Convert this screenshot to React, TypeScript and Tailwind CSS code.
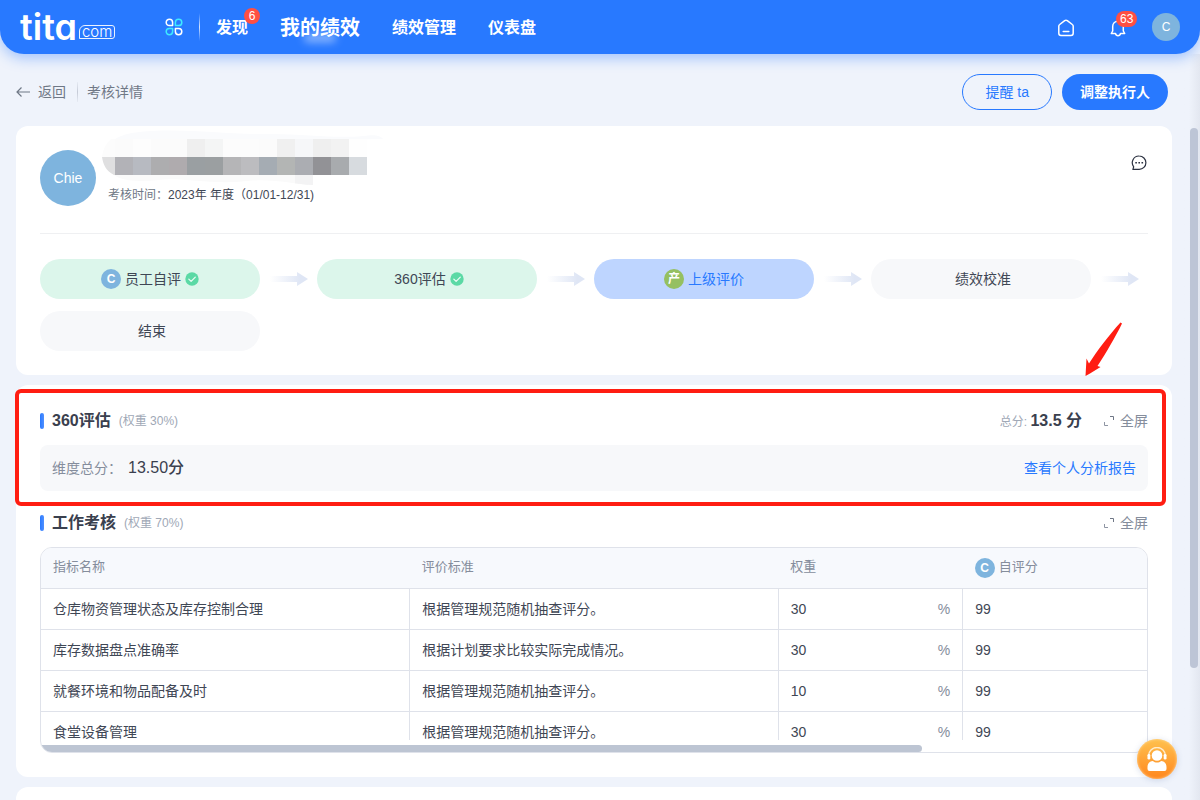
import type { ReactNode } from 'react'

type StepState = 'done' | 'current' | 'todo'

interface Step {
  label: string
  state: StepState
  badge?: { text: string; color: string }
}

const steps: Step[] = [
  { label: '员工自评', state: 'done', badge: { text: 'C', color: 'bg-[#7eb4de]' } },
  { label: '360评估', state: 'done' },
  { label: '上级评价', state: 'current', badge: { text: '产', color: 'bg-[#95c061]' } },
  { label: '绩效校准', state: 'todo' },
  { label: '结束', state: 'todo' },
]

const stepStyle = {
  done: 'bg-[#dcf6eb] text-[#3f4755]',
  current: 'bg-[#bed5ff] text-[#2879ff]',
  todo: 'bg-[#f7f8fa] text-[#3f4755]',
} as const

const rows = [
  { name: '仓库物资管理状态及库存控制合理', standard: '根据管理规范随机抽查评分。', weight: 30, score: 99 },
  { name: '库存数据盘点准确率', standard: '根据计划要求比较实际完成情况。', weight: 30, score: 99 },
  { name: '就餐环境和物品配备及时', standard: '根据管理规范随机抽查评分。', weight: 10, score: 99 },
  { name: '食堂设备管理', standard: '根据管理规范随机抽查评分。', weight: 30, score: 99 },
]

// one entry per 18px column of the masked name
const maskTop = ['#fbfbfb', '#fdfdfd', '#fbfbfb', '#fbfbfb', '#efefef', '#f4f5f5', '#fcfcfc', '#fcfcfc', '#fbfbfb', '#f0f0f0', '#f6f7f9', '#efefef', '#f2f2f2', '#fefefe']
const maskMain = ['#b2b2b7', '#b7bac1', '#adadaf', '#afabae', '#9a9fa2', '#9b9fa1', '#b5b5b7', '#bcbcbf', '#a5acb3', '#b3b5b4', '#abadb2', '#929296', '#a8abae', '#d7dbdf']

function AppsIcon() {
  return (
    <svg viewBox="0 0 18 18" className="h-[18px] w-[18px]" fill="none" strokeWidth="1.5" strokeLinejoin="round">
      <path d="M7.600 7.600H4.400a3.200 3.200 0 1 1 3.200-3.200z" stroke="#fff" />
      <path d="M10.400 7.600V4.400a3.200 3.200 0 1 1 3.200 3.200z" stroke="#3eeaff" />
      <path d="M7.600 10.400v3.200a3.200 3.200 0 1 1-3.200-3.200z" stroke="#3eeaff" />
      <path d="M10.400 10.400h3.200a3.200 3.200 0 1 1-3.200 3.200z" stroke="#fff" />
    </svg>
  )
}

function HomeIcon() {
  return (
    <svg viewBox="0 0 20 20" className="h-5 w-5" fill="none" stroke="#fff" strokeWidth="1.5" strokeLinecap="round" strokeLinejoin="round">
      <path d="M2.8 8.2c0-.7.3-1.3.9-1.7l5-3.8a2.1 2.1 0 0 1 2.6 0l5 3.8c.6.4.9 1 .9 1.7v7.1a2.2 2.2 0 0 1-2.2 2.2H5a2.2 2.2 0 0 1-2.2-2.2z" />
      <path d="M7.2 13.4h5.6" />
    </svg>
  )
}

function BellIcon() {
  return (
    <svg viewBox="0 0 20 20" className="h-5 w-5" fill="none" stroke="#fff" strokeWidth="1.5" strokeLinecap="round" strokeLinejoin="round">
      <path d="M10 3.200c-3.200 0-5.300 2.400-5.300 5.400v4.400l-1.400 2.500h4.200c.3 1.300 1.200 2.200 2.500 2.200s2.200-.9 2.500-2.200h4.200l-1.400-2.500V8.600c0-3-2.100-5.400-5.300-5.400z" />
    </svg>
  )
}

function CommentIcon() {
  return (
    <svg viewBox="0 0 16 16" className="h-4 w-4" fill="none" stroke="#2b3140" strokeWidth="1.2">
      <path d="M8.200 1a6.700 6.700 0 1 1 0 13.400H1.900l.8-2.600A6.700 6.700 0 0 1 8.200 1z" strokeLinejoin="round" />
      <path d="M4.300 7.800h1.600M7.400 7.800h1.600M10.500 7.800h1.600" strokeWidth="1.600" />
    </svg>
  )
}

function CheckIcon() {
  return (
    <svg viewBox="0 0 14 14" className="ml-1 h-[14px] w-[14px]" fill="none">
      <circle cx="7" cy="7" r="6.7" fill="#5bd9a5" />
      <path d="M3.8 7.1l2.3 2.3 4.2-4.3" stroke="#e9fbf3" strokeWidth="1.3" strokeLinecap="round" strokeLinejoin="round" />
    </svg>
  )
}

function StepArrow() {
  return (
    <svg viewBox="0 0 38 14" className="h-[14px] w-[38px]">
      <defs>
        <linearGradient id="step-arrow" x1="0" x2="1">
          <stop offset="0" stopColor="#dfe6f5" stopOpacity="0" />
          <stop offset="0.8" stopColor="#dfe6f5" />
        </linearGradient>
      </defs>
      <path d="M0 4h27V0l11 7-11 7v-4H0z" fill="url(#step-arrow)" />
    </svg>
  )
}

function MaskedName() {
  return (
    <svg viewBox="0 0 282 58" className="absolute -top-5 left-0 h-[58px] w-[282px]" aria-hidden="true">
      <defs>
        <clipPath id="mask-brush">
          <path d="M0 27C2 12 12 3 28 3H267V45H211V55C190 54 170 48 145 51C110 55 80 47 56 50C36 52 20 51 12 45C4 41 1 34 0 27z" />
        </clipPath>
      </defs>
      <path d="M4 20C10 6 26 2 50 1C90-1 120 4 160 4C200 3 230 9 262 6C274 4 280 7 281 9L60 12z" fill="#fafbfd" />
      <g clipPath="url(#mask-brush)" shapeRendering="crispEdges">
        <rect x="0" y="9" width="13" height="18" fill="#fcfcfc" />
        <rect x="0" y="27" width="13" height="18" fill="#dfdfe0" />
        <rect x="0" y="45" width="211" height="12" fill="#fafafa" />
        <rect x="193" y="45" width="18" height="12" fill="#f3f3f4" />
        {maskTop.map((color, i) => (
          <rect key={i} x={13 + i * 18} y="9" width="18" height="18" fill={color} />
        ))}
        {maskMain.map((color, i) => (
          <rect key={i} x={13 + i * 18} y="27" width="18" height="18" fill={color} />
        ))}
      </g>
    </svg>
  )
}

function FullscreenButton() {
  return (
    <button className="flex items-center gap-1.5 text-sm text-[#858d9c]">
      <svg viewBox="0 0 10 10" className="h-[10px] w-[10px]" fill="none" strokeWidth="1">
        <path d="M6 .5h3.5V4" stroke="#6f7786" />
        <path d="M.5 6v3.5H4" stroke="#8e95a3" />
      </svg>
      全屏
    </button>
  )
}

function SectionHeader({ title, weight, children }: { title: string; weight: string; children: ReactNode }) {
  return (
    <div className="flex h-6 items-center">
      <span className="mr-2 h-4 w-1 rounded-[2px] bg-linear-to-r from-[#2879ff] to-[#5090ff]" />
      <h2 className="text-base font-bold text-[#3a404e]">{title}</h2>
      <span className="ml-2 text-xs text-[#a0a8b6]">({`权重 ${weight}`})</span>
      <div className="ml-auto flex items-center">{children}</div>
    </div>
  )
}

function Header() {
  return (
    <header className="relative z-10 flex h-[54px] shrink-0 items-center rounded-b-3xl bg-[#2879ff] pr-5 pl-5 text-white shadow-[0_4px_14px_rgba(40,121,255,0.4)]">
      <a href="#" className="flex w-[98px] items-end font-['Inter'] [font-feature-settings:'cv11']">
        <span className="text-[36px] leading-10 font-semibold">tita</span>
        <span className="mb-2 ml-0.5 flex h-[14px] items-center rounded-tl-md rounded-r-[3px] border border-white/90 px-0.5 pb-0.5 text-[15px] leading-none font-light">com</span>
      </a>
      <button aria-label="应用" className="ml-[47px]">
        <AppsIcon />
      </button>
      <span className="mx-4 h-7 w-px bg-linear-to-b from-white/0 via-white/80 to-white/0" />
      <nav className="flex items-center gap-8 pt-0.5 text-base font-bold">
        <a href="#" className="relative">
          发现
          <span className="absolute -top-2 left-7 flex h-4 w-4 items-center justify-center rounded-full bg-[#ff4f43] text-xs font-normal">6</span>
        </a>
        <a href="#" className="relative text-xl">
          我的绩效
          <span className="absolute bottom-0 left-6 h-2 w-8 rounded-full bg-white/50 blur-[4px]" />
        </a>
        <a href="#">绩效管理</a>
        <a href="#">仪表盘</a>
      </nav>
      <div className="ml-auto flex items-center gap-6">
        <button aria-label="首页" className="mt-0.5 mr-2">
          <HomeIcon />
        </button>
        <button aria-label="通知" className="relative mt-0.5">
          <BellIcon />
          <span className="absolute -top-[7px] left-2 flex h-4 items-center rounded-full bg-[#ff4f43] px-1 text-xs">63</span>
        </button>
        <button className="flex h-7 w-7 items-center justify-center rounded-full bg-[#7eb4de] text-xs">C</button>
      </div>
    </header>
  )
}

function ProfileCard() {
  return (
    <section className="rounded-xl bg-white p-6">
      <div className="flex border-b border-[#eff0f2] pb-[26px]">
        <div className="flex h-14 w-14 shrink-0 items-center justify-center rounded-full bg-[#7eb4de] text-sm text-white">Chie</div>
        <div className="relative ml-1.5">
          <div className="h-8">
            <MaskedName />
          </div>
          <p className="relative pt-px pl-1.5 text-xs leading-6 text-[#3f4755]">
            <span className="text-[#6f7886]">考核时间：</span>2023年 年度（01/01-12/31)
          </p>
        </div>
        <button aria-label="评论" className="mt-[5px] mr-px ml-auto self-start">
          <CommentIcon />
        </button>
      </div>
      <ol className="mt-[25px] grid grid-cols-4 gap-y-3">
        {steps.map((step, i) => (
          <li key={step.label} className="flex items-center">
            <div className={`flex h-10 flex-1 items-center justify-center rounded-full text-sm ${stepStyle[step.state]}`}>
              {step.badge && (
                <span className={`flex h-5 w-5 items-center justify-center rounded-full text-xs font-bold text-white ${step.badge.color}`}>{step.badge.text}</span>
              )}
              <span className="ml-1">{step.label}</span>
              {step.state === 'done' && <CheckIcon />}
            </div>
            <div className="flex w-[57px] justify-center">{i < steps.length - 1 && <StepArrow />}</div>
          </li>
        ))}
      </ol>
    </section>
  )
}

function ScoreTable() {
  return (
    <div className="mt-3 overflow-hidden rounded-xl border border-[#dfe2ea]">
      <div className="max-h-[192px] overflow-hidden">
        <table className="w-full table-fixed text-left text-sm text-[#3f4755]">
          <thead>
            <tr className="h-10 border-b border-[#dfe2ea] bg-[#f7f9fd] text-[13px] text-[#858d9c]">
              <th className="w-1/3 px-3 font-normal">指标名称</th>
              <th className="w-1/3 px-3 font-normal">评价标准</th>
              <th className="w-1/6 px-3 font-normal">权重</th>
              <th className="w-1/6 px-3 font-normal">
                <span className="flex items-center gap-1">
                  <span className="flex h-5 w-5 items-center justify-center rounded-full bg-[#7eb4de] text-xs font-bold text-white">C</span>
                  自评分
                </span>
              </th>
            </tr>
          </thead>
          <tbody>
            {rows.map((row) => (
              <tr key={row.name} className="h-[41px] border-b border-[#dfe2ea]">
                <td className="border-r border-[#dfe2ea] px-3">{row.name}</td>
                <td className="border-r border-[#dfe2ea] px-3">{row.standard}</td>
                <td className="border-r border-[#dfe2ea] px-3">
                  <span className="flex justify-between">
                    {row.weight}
                    <span className="text-[#858d9c]">%</span>
                  </span>
                </td>
                <td className="px-3">{row.score}</td>
              </tr>
            ))}
          </tbody>
        </table>
      </div>
      <div className="mt-[5px] h-[7px] w-[calc(80%-4px)] rounded-r-full bg-[#bdc5d3]" />
    </div>
  )
}

function ResultCard() {
  return (
    <section className="relative rounded-xl bg-white p-6">
      <SectionHeader title="360评估" weight="30%">
        <span className="mr-[22px] text-xs text-[#a0a8b6]">
          总分: <b className="text-base text-[#3a404e]">13.5 分</b>
        </span>
        <FullscreenButton />
      </SectionHeader>
      <div className="mt-3 mb-5 flex h-[46px] items-center rounded-lg bg-[#f7f8fa] px-3 text-sm">
        <span className="text-[#858d9c]">维度总分：</span>
        <span className="ml-1.5 text-base text-[#3a404e]">
          13.50<span className="font-medium">分</span>
        </span>
        <a href="#" className="ml-auto text-[#2879ff]">查看个人分析报告</a>
      </div>
      <SectionHeader title="工作考核" weight="70%">
        <FullscreenButton />
      </SectionHeader>
      <ScoreTable />

      {/* red callout around the 360 score */}
      <div className="pointer-events-none absolute top-1 right-1.5 -left-px h-[117px] rounded-md border-4 border-[#ff1d12]" />
      <svg viewBox="0 0 38 54" className="pointer-events-none absolute -top-[63px] right-[49px] h-[54px] w-[38px]">
        <path d="M0.5 54L1.5 36.5L4 41.5C12 29 24 13 35.500 0.500L37 1.500C31 14 21 31 12.500 44L15.500 45L5 51.500z" fill="#ff1d12" />
      </svg>
    </section>
  )
}

export default function App() {
  return (
    <div className="relative flex h-screen flex-col overflow-hidden bg-[#eff3fb] font-['Liberation_Sans','Noto_Sans_CJK_SC',sans-serif]">
      <Header />
      <div className="flex min-h-0 flex-1">
        <main className="min-w-0 flex-1 pl-4">
          <div className="flex h-[72px] items-center pt-1 pr-1 text-sm text-[#6f7886]">
            <a href="#" className="flex items-center gap-2">
              <svg viewBox="0 0 14 12" className="h-3 w-[14px]" fill="none" stroke="#6f7886" strokeWidth="1.2">
                <path d="M14 6H1.200M5.500 1.500L1 6l4.500 4.500" />
              </svg>
              返回
            </a>
            <span className="mr-[9px] ml-[11px] h-5 w-px bg-linear-to-b from-[#c5cad6]/20 via-[#c5cad6] to-[#c5cad6]/20" />
            <h1>考核详情</h1>
            <button className="ml-auto h-9 rounded-full border border-[#2879ff] px-[22px] text-[#2879ff]">提醒 ta</button>
            <button className="ml-[10px] h-9 rounded-full bg-[#2879ff] px-[18px] font-bold text-white">调整执行人</button>
          </div>
          <div className="flex flex-col gap-[10px]">
            <ProfileCard />
            <ResultCard />
            <section className="h-16 rounded-xl bg-white" />
          </div>
        </main>
        <div className="flex w-7 justify-end bg-linear-to-r from-[#eff3fb] from-60% to-[#e3e7f0] pt-[74px] pr-0.5">
          <div className="h-[540px] w-2 rounded-full bg-[#bdc5d6]" />
        </div>
      </div>
      <button
        aria-label="客服"
        className="absolute right-[23px] bottom-[21px] flex h-10 w-10 items-center justify-center rounded-full bg-linear-to-b from-[#ffc14d] to-[#ff861c] shadow-[inset_0_0_3px_#ffd9a0,0_1px_6px_rgba(60,90,150,0.2)]"
      >
        <svg viewBox="0 0 20 24" className="h-6 w-5" fill="#fff">
          <circle cx="10" cy="8.500" r="5.300" />
          <path d="M1.500 9a8.500 8.500 0 0 1 17 0" fill="none" stroke="#ffeccb" strokeWidth="1.500" />
          <rect x="0.500" y="7" width="2.800" height="5.500" rx="1.300" />
          <rect x="16.700" y="7" width="2.800" height="5.500" rx="1.300" />
          <path d="M.5 20c0-3.800 2.500-6 5.500-6 1 1 2.500 1.500 4 1.500s3-.5 4-1.500c3 0 5.500 2.200 5.500 6v2a2 2 0 0 1-2 2h-15a2 2 0 0 1-2-2z" />
        </svg>
      </button>
    </div>
  )
}
